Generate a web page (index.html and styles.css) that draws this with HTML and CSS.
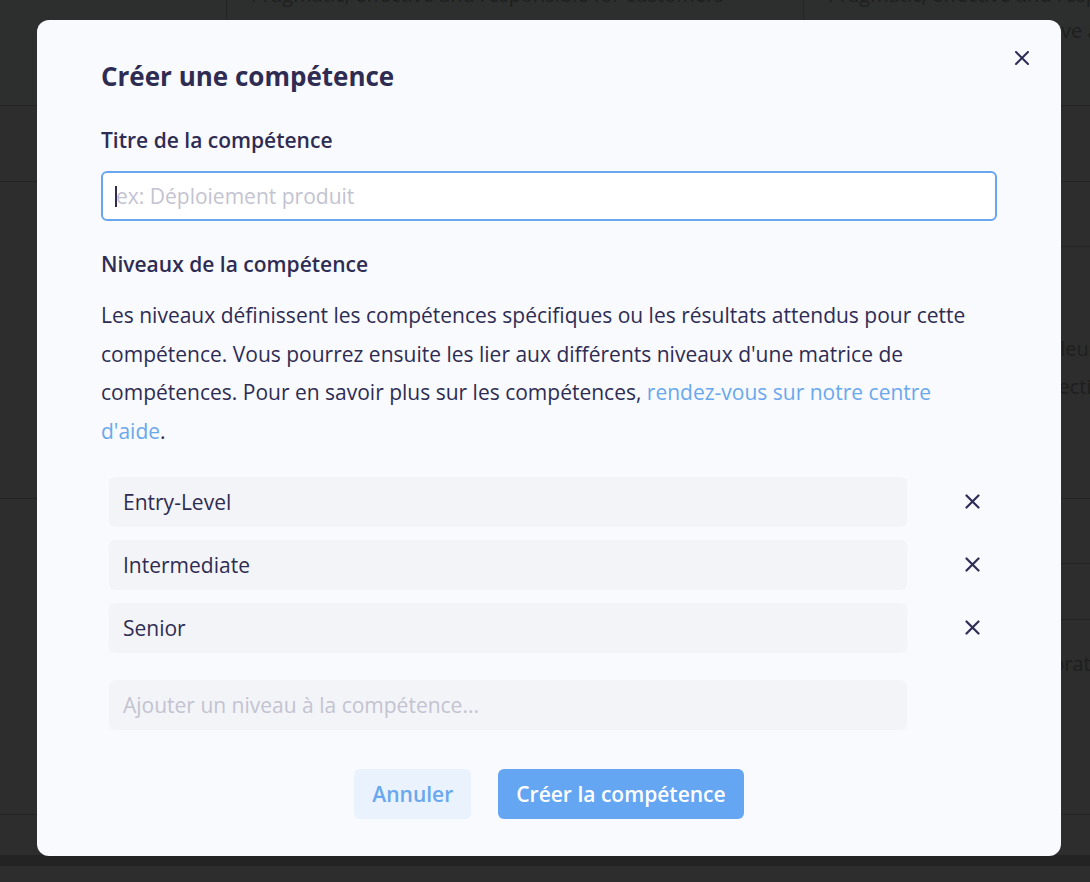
FILE: index.html
```html
<!DOCTYPE html>
<html lang="fr">
<head>
  <meta charset="UTF-8" />
  <meta name="viewport" content="width=device-width, initial-scale=1.0"/>
  <title>Créer une compétence</title>
  <link rel="stylesheet" href="styles.css">
</head>
<body>
  <div class="backdrop">
    <div class="bg-row bg-row-top">
      <div class="bg-cell bg-first"></div>
      <div class="bg-cell bg-mid"><span class="bg-text">Pragmatic, effective and responsible for customers</span></div>
      <div class="bg-cell bg-last"><span class="bg-text">Pragmatic, effective and responsible</span><span class="bg-text bg-second">Takes initiative, is proactive and accountable</span></div>
    </div>
    <div class="bg-row bg-row-2"></div>
    <div class="bg-row bg-row-3">
      <div class="bg-cell bg-first"></div>
      <div class="bg-cell bg-mid"></div>
      <div class="bg-cell bg-last bg-split">
        <div class="bg-sub bg-sub-a"></div>
        <div class="bg-sub bg-sub-b"><span class="bg-text">Atteint les objectifs de valeur</span><span class="bg-text">Dépasse de 20 % des objectifs</span></div>
      </div>
    </div>
    <div class="bg-row bg-row-4">
      <div class="bg-cell bg-first"></div>
      <div class="bg-cell bg-mid"></div>
      <div class="bg-cell bg-last bg-split">
        <div class="bg-sub bg-sub-c"></div>
        <div class="bg-sub bg-sub-d"></div>
        <div class="bg-sub bg-sub-e"><span class="bg-text">Favorise la bonne collaboration</span></div>
      </div>
    </div>
    <div class="bg-row bg-row-5"></div>
    <div class="bg-footer"></div>
  </div>

  <div class="modal">
    <button class="close-btn" aria-label="Fermer">
      <svg width="14" height="14" viewBox="0 0 14 14"><path d="M1 1L13 13M13 1L1 13" stroke="#2f2d55" stroke-width="2" stroke-linecap="round"/></svg>
    </button>

    <h2 class="modal-title">Créer une compétence</h2>

    <label class="field-label" for="skillTitle">Titre de la compétence</label>
    <div class="title-input">
      <span class="caret"></span>
      <input id="skillTitle" type="text" placeholder="ex: Déploiement produit">
    </div>

    <h3 class="field-label levels-label">Niveaux de la compétence</h3>
    <p class="levels-text">
      Les niveaux définissent les compétences spécifiques ou les résultats attendus pour cette
      compétence. Vous pourrez ensuite les lier aux différents niveaux d'une matrice de
      compétences. Pour en savoir plus sur les compétences, <a href="#">rendez-vous sur notre centre d'aide</a>.
    </p>

    <div class="levels" id="levels"></div>

    <div class="level-row">
      <input class="level-item level-add" type="text" placeholder="Ajouter un niveau à la compétence...">
    </div>

    <div class="button-group">
      <button class="btn btn-light">Annuler</button>
      <button class="btn btn-primary">Créer la compétence</button>
    </div>
  </div>

  <script>
    const levels = ["Entry-Level", "Intermediate", "Senior"];
    const list = document.getElementById("levels");

    levels.forEach(level => {
      let row = document.createElement("div");
      row.className = "level-row";
      row.innerHTML = `
        <div class="level-item">${level}</div>
        <button class="remove-btn" aria-label="Supprimer">
          <svg width="15" height="15" viewBox="0 0 15 15"><path d="M1.5 1.5L13.5 13.5M13.5 1.5L1.5 13.5" stroke="#2f2d55" stroke-width="2.2" stroke-linecap="round"/></svg>
        </button>
      `;
      list.appendChild(row);
    });
  </script>
</body>
</html>
```

FILE: styles.css
```css
body {
  margin: 0;
  font-family: "Open Sans", Lato, sans-serif;
  background-color: #2c2d2c;
  overflow: hidden;
}

/* page behind the overlay */
.backdrop {
  height: 882px;
  display: flex;
  flex-direction: column;
}

.bg-row {
  display: flex;
  border-bottom: 1px solid #222322;
}

.bg-row-top {
  height: 105px;
  background-color: #2d2f2e;
}

.bg-row-2 {
  height: 75px;
}

.bg-row-3 {
  height: 316px;
}

.bg-row-4 {
  height: 315px;
}

.bg-row-5 {
  height: 40px;
}

.bg-cell {
  position: relative;
  flex-shrink: 0;
}

.bg-first {
  width: 226px;
}

.bg-mid {
  width: 576px;
  border-left: 1px solid #232423;
  overflow: hidden;
}

.bg-last {
  flex: 1;
  min-width: 0;
  border-left: 1px solid #232423;
  overflow: hidden;
}

.bg-split {
  display: flex;
  flex-direction: column;
}

.bg-sub {
  border-bottom: 1px solid #232423;
}

.bg-sub-a {
  height: 64px;
}

.bg-sub-b {
  flex: 1;
  border-bottom: none;
  padding: 88px 0 0 24px;
  display: flex;
  flex-direction: column;
  gap: 10px;
}

.bg-sub-c {
  height: 64px;
}

.bg-sub-d {
  height: 55px;
}

.bg-sub-e {
  flex: 1;
  border-bottom: none;
  padding: 30px 0 0 24px;
}

.bg-text {
  display: block;
  color: #1e1f1e;
  font-size: 20px;
  line-height: 28px;
  white-space: nowrap;
}

.bg-row-top .bg-text {
  padding-left: 24px;
}

.bg-row-top .bg-text:first-child {
  margin-top: -19px;
}

.bg-row-top .bg-second {
  margin-top: 8px;
}

.bg-footer {
  height: 10px;
  background-color: #232323;
}

/* modal */
.modal {
  position: absolute;
  left: 37px;
  top: 20px;
  width: 1024px;
  height: 836px;
  box-sizing: border-box;
  padding: 40px 64px 0;
  background-color: #f9fafd;
  border-radius: 12px;
  color: #2e2c53;
}

.close-btn {
  position: absolute;
  top: 26px;
  right: 27px;
  width: 24px;
  height: 24px;
  padding: 0;
  border: none;
  background: none;
  display: flex;
  align-items: center;
  justify-content: center;
  cursor: pointer;
}

.modal-title {
  margin: 0;
  font-size: 26px;
  line-height: 32px;
  font-weight: 700;
}

.field-label {
  display: block;
  margin: 35px 0 0;
  font-size: 21px;
  line-height: 26px;
  font-weight: 600;
}

.title-input {
  position: relative;
  margin-top: 18px;
}

.title-input input {
  width: 100%;
  height: 50px;
  box-sizing: border-box;
  padding: 0 13px;
  border: 2px solid #6aa6f0;
  border-radius: 6px;
  background-color: #fff;
  font-family: inherit;
  font-size: 21px;
  color: #2e2c53;
  outline: none;
}

.caret {
  position: absolute;
  left: 14px;
  top: 15px;
  width: 2px;
  height: 21px;
  background-color: #2e2c53;
}

input::placeholder {
  color: #c3c3d1;
}

.levels-label {
  margin-top: 30px;
}

.levels-text {
  margin: 19px 0 0;
  font-size: 21px;
  line-height: 38.7px;
  color: #2e2c53;
}

.levels-text a {
  color: #6aa8ec;
  text-decoration: none;
}

.levels {
  margin-top: 26px;
  display: flex;
  flex-direction: column;
  gap: 13px;
}

.level-row {
  display: flex;
  align-items: center;
  margin-left: 8px;
}

.level-item {
  width: 798px;
  height: 50px;
  box-sizing: border-box;
  padding: 0 14px;
  display: flex;
  align-items: center;
  background-color: #f3f4f7;
  border-radius: 6px;
  font-size: 21px;
  color: #2e2c53;
}

.level-add {
  margin-top: 27px;
  border: none;
  font-family: inherit;
  outline: none;
}

.remove-btn {
  margin-left: 55px;
  width: 20px;
  height: 20px;
  padding: 0;
  border: none;
  background: none;
  display: flex;
  align-items: center;
  justify-content: center;
  cursor: pointer;
}

.button-group {
  display: flex;
  justify-content: center;
  gap: 27px;
  margin-top: 39px;
}

.btn {
  height: 50px;
  padding: 0 18px;
  border: none;
  border-radius: 6px;
  font-family: inherit;
  font-size: 21px;
  font-weight: 600;
  cursor: pointer;
}

.btn-light {
  background-color: #eaf2fd;
  color: #69a7ee;
}

.btn-primary {
  background-color: #65a6f2;
  color: #fff;
}
```
